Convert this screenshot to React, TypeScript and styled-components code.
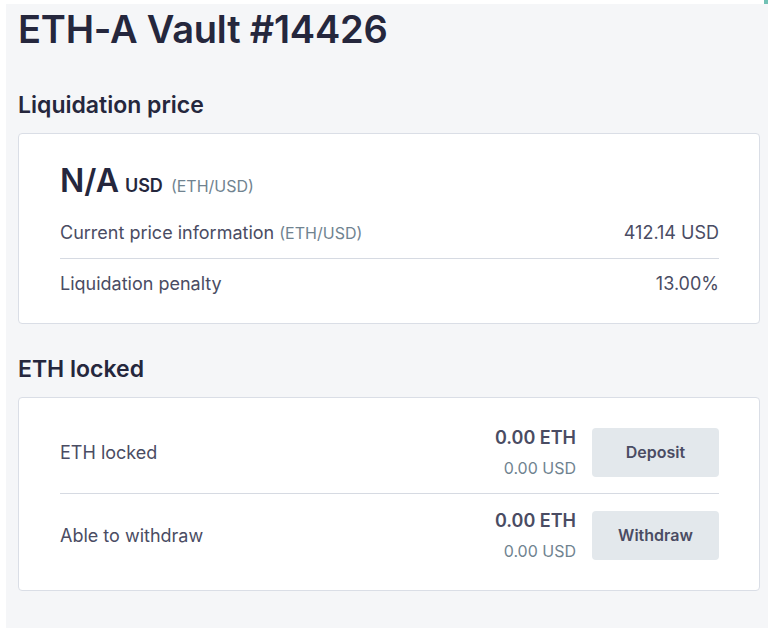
import React from "react";
import styled, { createGlobalStyle } from "styled-components";

const GlobalStyle = createGlobalStyle`
  body {
    margin: 0;
    background: #fff;
    font-family: Inter, Roboto, sans-serif;
    -webkit-font-smoothing: antialiased;
  }
`;

const Marker = styled.div`
  position: absolute;
  top: 0;
  right: 0;
  width: 4px;
  height: 4px;
  background: #72c1b5;
`;

const Page = styled.main`
  margin: 4px 0 0 6px;
  min-height: 624px;
  box-sizing: border-box;
  background: #f5f6f8;
  padding: 2px 8px 0 12px;
  color: #25273d;
`;

const Title = styled.h1`
  margin: 0;
  font-size: 38px;
  font-weight: 600;
  line-height: 46px;
  letter-spacing: -0.2px;
`;

const SectionTitle = styled.h2<{ $top: number }>`
  margin: ${({ $top }) => $top}px 0 14px;
  font-size: 23px;
  font-weight: 600;
  line-height: 28px;
`;

const Card = styled.section<{ $pad: string }>`
  background: #fff;
  border: 1px solid #dadee6;
  border-radius: 4px;
  padding: ${({ $pad }) => $pad};
`;

const Headline = styled.div`
  display: flex;
  align-items: baseline;
  gap: 8px;
  line-height: 38px;
  margin-bottom: 3px;
`;

const Big = styled.span`
  font-size: 32px;
  font-weight: 600;
`;

const Unit = styled.span`
  font-size: 18px;
  font-weight: 600;
  margin-left: -2px;
`;

const Muted = styled.span`
  font-size: 16px;
  color: #708390;
`;

const InfoRow = styled.div`
  display: flex;
  justify-content: space-between;
  align-items: baseline;
  font-size: 18px;
  line-height: 24px;
  color: #4a4c63;
  padding: 13px 0;
  & + & {
    border-top: 1px solid #d6dae2;
  }
`;

const ActionRow = styled.div`
  display: flex;
  align-items: center;
  padding: 15px 0;
  & + & {
    border-top: 1px solid #d6dae2;
  }
`;

const Label = styled.span`
  flex: 1;
  font-size: 18px;
  color: #4a4c63;
`;

const Amounts = styled.div`
  display: flex;
  flex-direction: column;
  align-items: flex-end;
  gap: 8px;
  margin-right: 16px;
  line-height: 20px;
`;

const Eth = styled.span`
  font-size: 18px;
  font-weight: 600;
  line-height: 24px;
  color: #4a4c63;
`;

const Button = styled.button`
  width: 127px;
  height: 49px;
  border: none;
  border-radius: 4px;
  background: #e3e8ec;
  color: #4a4c63;
  font-family: inherit;
  font-size: 16px;
  font-weight: 600;
`;

const actions = [
  { label: "ETH locked", eth: "0.00 ETH", usd: "0.00 USD", button: "Deposit" },
  { label: "Able to withdraw", eth: "0.00 ETH", usd: "0.00 USD", button: "Withdraw" },
];

const App = (): JSX.Element => (
  <>
    <GlobalStyle />
    <Marker />
    <Page>
      <Title>ETH-A Vault #14426</Title>
      <SectionTitle $top={39}>Liquidation price</SectionTitle>
      <Card $pad="28px 40px 14px 41px">
        <Headline>
          <Big>N/A</Big>
          <Unit>USD</Unit>
          <Muted>(ETH/USD)</Muted>
        </Headline>
        <InfoRow>
          <span>
            Current price information <Muted>(ETH/USD)</Muted>
          </span>
          <span>412.14 USD</span>
        </InfoRow>
        <InfoRow>
          <span>Liquidation penalty</span>
          <span>13.00%</span>
        </InfoRow>
      </Card>
      <SectionTitle $top={31}>ETH locked</SectionTitle>
      <Card $pad="13px 40px 14px 41px">
        {actions.map((a) => (
          <ActionRow key={a.label}>
            <Label>{a.label}</Label>
            <Amounts>
              <Eth>{a.eth}</Eth>
              <Muted>{a.usd}</Muted>
            </Amounts>
            <Button>{a.button}</Button>
          </ActionRow>
        ))}
      </Card>
    </Page>
  </>
);

export default App;
